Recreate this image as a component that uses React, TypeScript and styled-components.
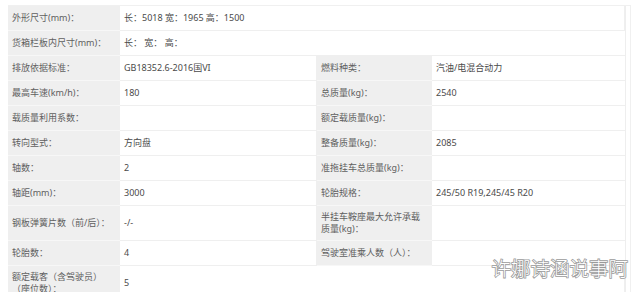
import React from "react";
import styled, { createGlobalStyle } from "styled-components";

const GlobalStyle = createGlobalStyle`
  html, body {
    margin: 0;
    padding: 0;
    background: #ffffff;
  }
  body {
    font-family: "Noto Sans", "Noto Sans CJK SC", sans-serif;
  }
`;

const Page = styled.div`
  position: relative;
  width: 640px;
  height: 292px;
  overflow: hidden;
  box-sizing: border-box;
  padding: 5px 0 0 8px;
  background: #ffffff;
`;

const Frame = styled.div`
  width: 623px;
  box-sizing: border-box;
  border-top: 1px solid #f0f0f0;
  border-right: 1px solid #f0f0f0;
`;

const Grid = styled.div`
  display: grid;
  grid-template-columns: 112px 197px 115px 193px;
  width: 618px;
  box-sizing: border-box;
  border-right: 1px solid #eeeeee;
  font-size: 9px;
  line-height: 12px;
`;

const Label = styled.div`
  display: flex;
  align-items: center;
  box-sizing: border-box;
  min-height: 25px;
  padding: 5px 5px 5px 4px;
  background: #efefef;
  color: #606060;
  border-bottom: 1px solid #f7f7f7;
`;

const Value = styled.div<{ $span?: number }>`
  display: flex;
  align-items: center;
  box-sizing: border-box;
  min-height: 25px;
  padding: 5px 4px;
  background: #ffffff;
  color: #4a4a4a;
  border-bottom: 1px solid #efefef;
  grid-column: span ${(p) => p.$span ?? 1};
  &:nth-child(4n + 2) {
    border-right: 1px solid #efefef;
  }
`;

const Watermark = styled.div`
  position: absolute;
  right: 12px;
  top: 256px;
  font-family: "Noto Sans CJK SC", sans-serif;
  font-size: 19.5px;
  font-weight: 300;
  line-height: 24px;
  color: #ffffff;
  -webkit-text-stroke: 1.6px #9a9a9a;
  paint-order: stroke fill;
  white-space: nowrap;
`;

type Row =
  | { kind: "wide"; label: string; value: string }
  | { kind: "pair"; l1: string; v1: string; l2: string; v2: string };

const rows: Row[] = [
  { kind: "wide", label: "外形尺寸(mm)：", value: "长：5018 宽：1965 高：1500" },
  { kind: "wide", label: "货箱栏板内尺寸(mm)：", value: "长： 宽： 高：" },
  { kind: "pair", l1: "排放依据标准：", v1: "GB18352.6-2016国VI", l2: "燃料种类：", v2: "汽油/电混合动力" },
  { kind: "pair", l1: "最高车速(km/h)：", v1: "180", l2: "总质量(kg)：", v2: "2540" },
  { kind: "pair", l1: "载质量利用系数：", v1: "", l2: "额定载质量(kg)：", v2: "" },
  { kind: "pair", l1: "转向型式：", v1: "方向盘", l2: "整备质量(kg)：", v2: "2085" },
  { kind: "pair", l1: "轴数：", v1: "2", l2: "准拖挂车总质量(kg)：", v2: "" },
  { kind: "pair", l1: "轴距(mm)：", v1: "3000", l2: "轮胎规格：", v2: "245/50 R19,245/45 R20" },
  { kind: "pair", l1: "钢板弹簧片数（前/后）：", v1: "-/-", l2: "半挂车鞍座最大允许承载质量(kg)：", v2: "" },
  { kind: "pair", l1: "轮胎数：", v1: "4", l2: "驾驶室准乘人数（人）：", v2: "" },
  { kind: "wide", label: "额定载客（含驾驶员）（座位数）：", value: "5" },
];

export default function App() {
  return (
    <>
      <GlobalStyle />
      <Page>
        <Frame>
          <Grid>
            {rows.map((r, i) =>
              r.kind === "wide" ? (
                <React.Fragment key={i}>
                  <Label>{r.label}</Label>
                  <Value $span={3}>{r.value}</Value>
                </React.Fragment>
              ) : (
                <React.Fragment key={i}>
                  <Label>{r.l1}</Label>
                  <Value>{r.v1}</Value>
                  <Label>{r.l2}</Label>
                  <Value>{r.v2}</Value>
                </React.Fragment>
              )
            )}
          </Grid>
        </Frame>
        <Watermark>许娜诗涵说事阿</Watermark>
      </Page>
    </>
  );
}
